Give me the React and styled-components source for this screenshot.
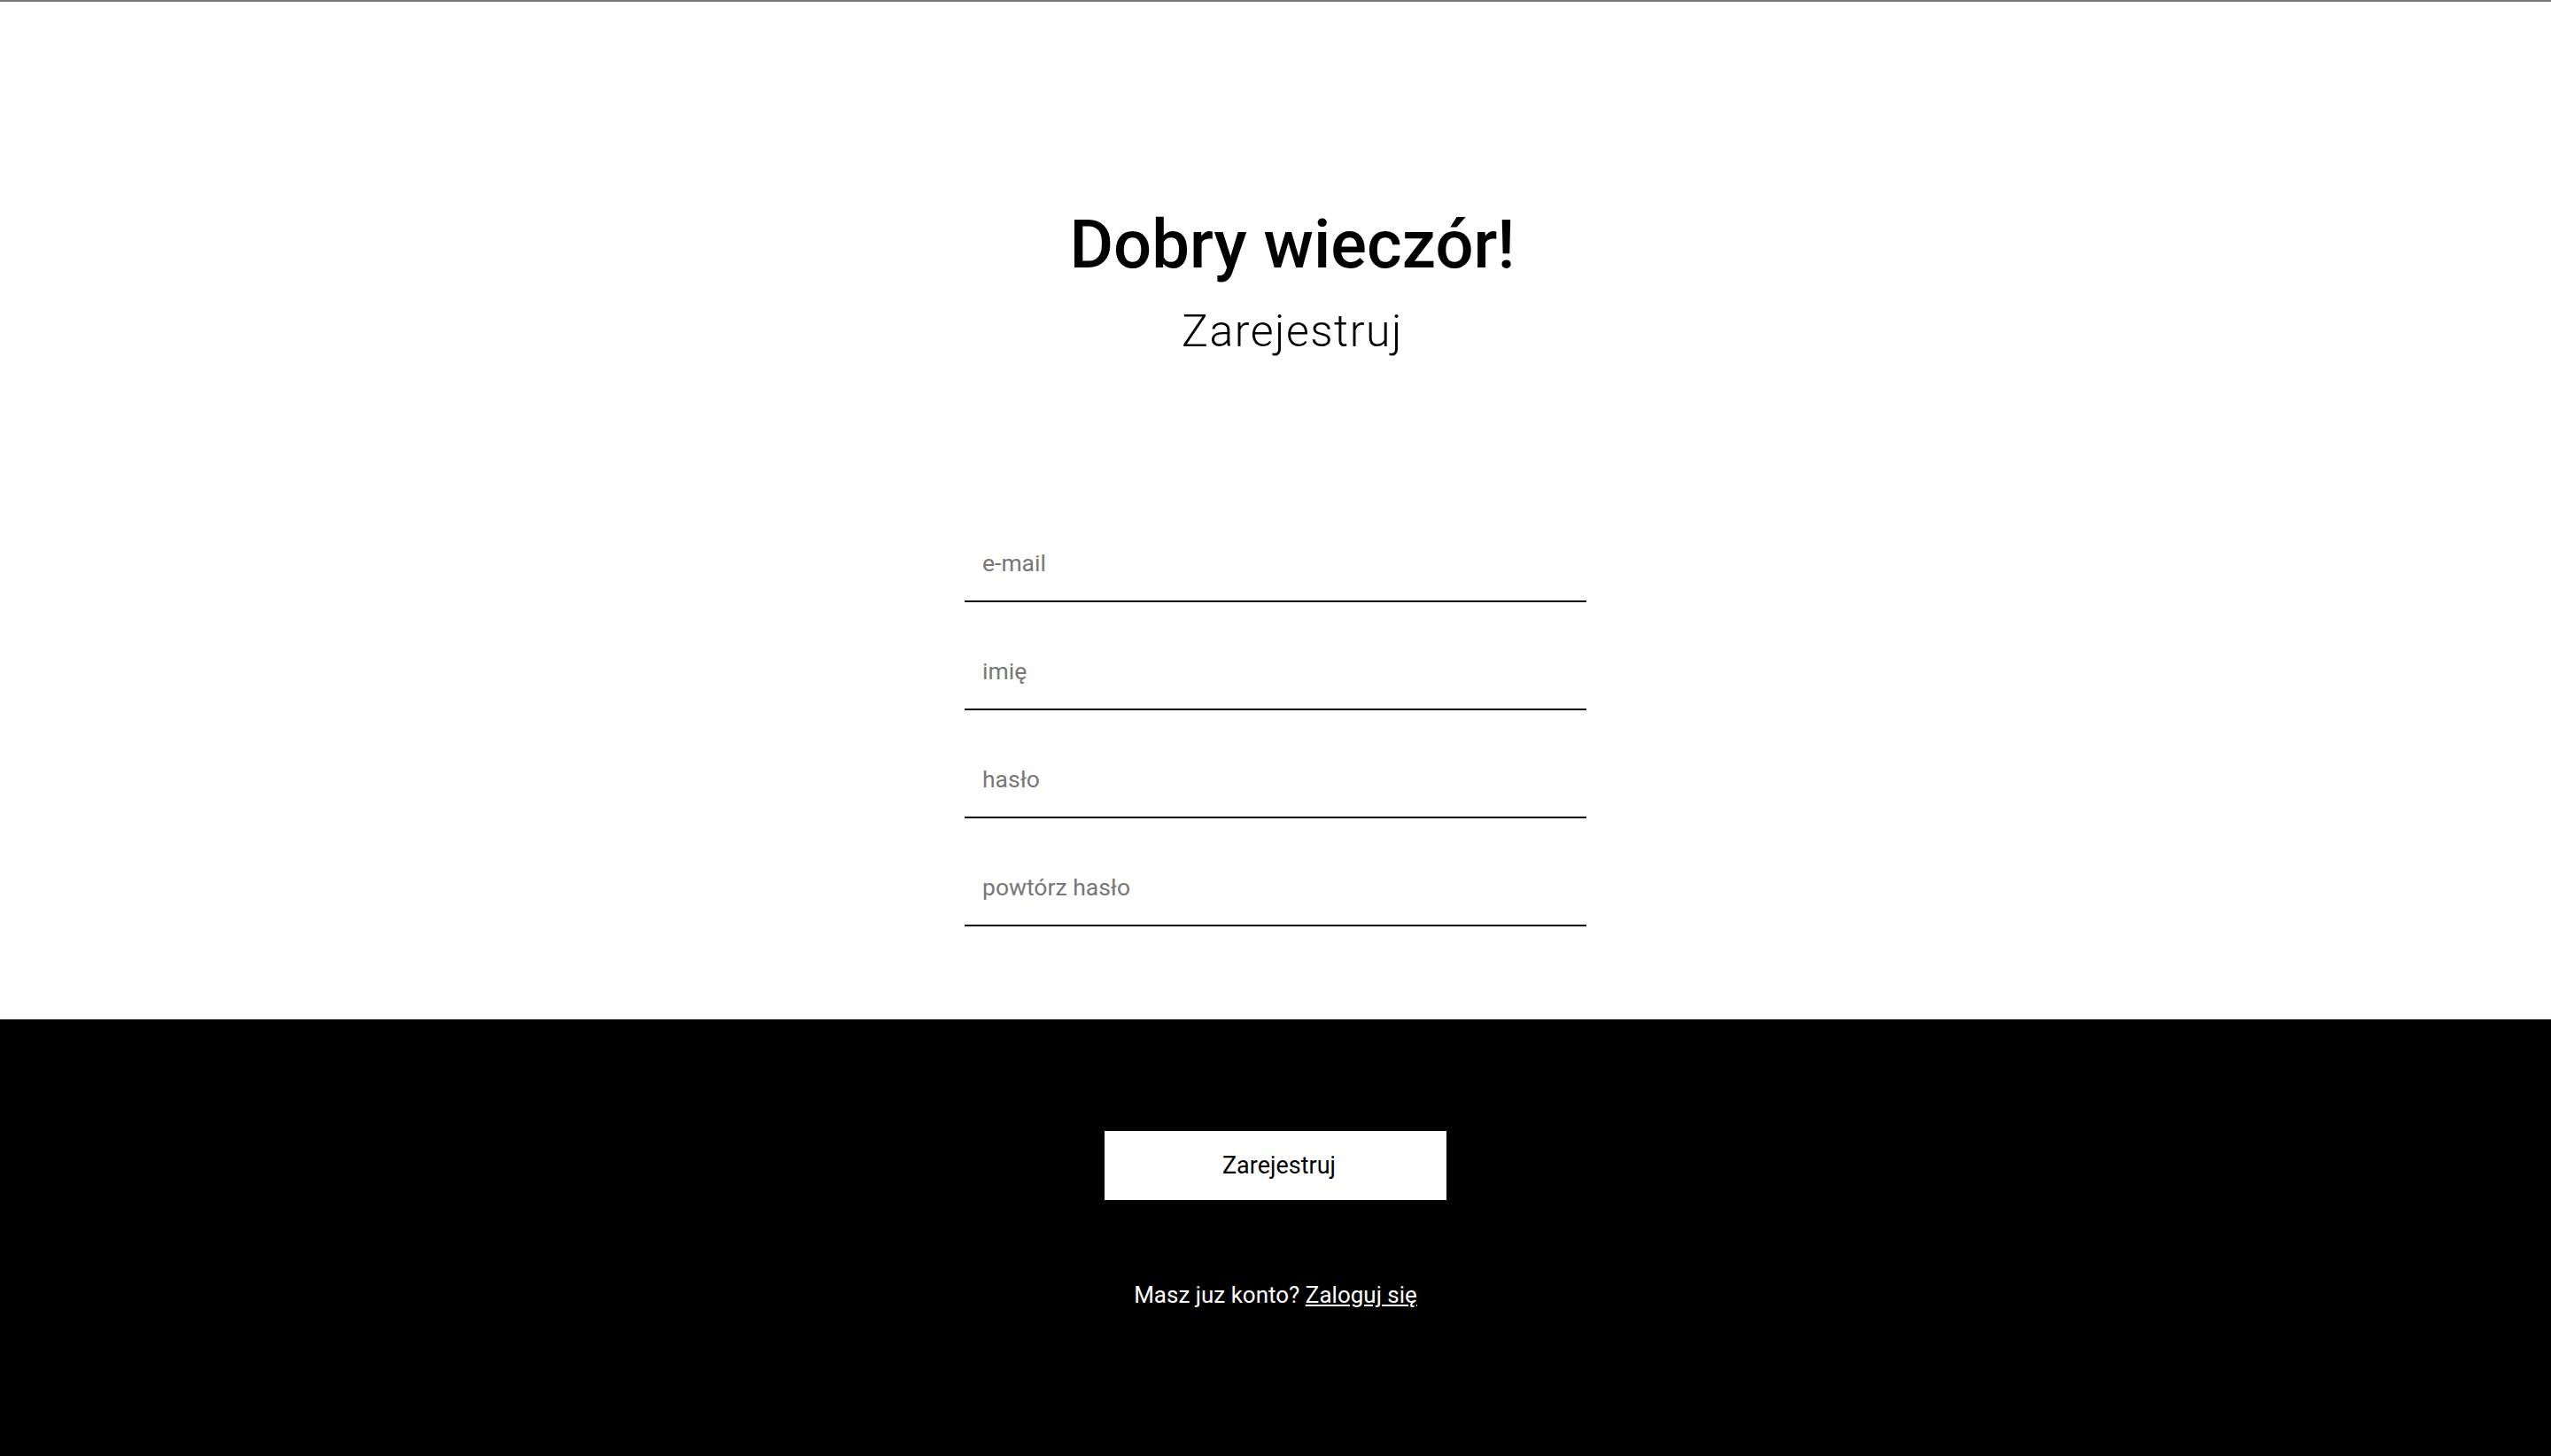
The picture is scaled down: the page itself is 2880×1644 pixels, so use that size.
import React from "react";
import styled, { createGlobalStyle } from "styled-components";

const Global = createGlobalStyle`
  html, body { margin: 0; padding: 0; background: #fff; }
  body { font-family: Roboto, "Open Sans", Arial, sans-serif; }
  * { box-sizing: border-box; }
`;

const Page = styled.div`
  display: flex;
  flex-direction: column;
  min-height: 100vh;
  border-top: 2px solid #777;
`;

const Upper = styled.section`
  height: 1149px;
  display: flex;
  flex-direction: column;
  align-items: center;
  padding-top: 228px;
`;

const Heading = styled.header`
  display: flex;
  flex-direction: column;
  align-items: center;
  padding-left: 38px;
`;

const Title = styled.h1`
  margin: 0;
  font-size: 76px;
  font-weight: 500;
  line-height: 92px;
  color: #000;
`;

const Subtitle = styled.h2`
  margin: 20px 0 0;
  font-size: 50px;
  font-weight: 300;
  letter-spacing: 1.5px;
  line-height: 64px;
  color: #000;
`;

const Form = styled.form`
  display: flex;
  flex-direction: column;
  gap: 42px;
  margin-top: 194px;
  width: 702px;
`;

const Field = styled.input`
  height: 80px;
  width: 100%;
  border: none;
  border-bottom: 2px solid #000;
  padding: 0 20px 8px;
  font-family: Roboto, Arial, sans-serif;
  font-size: 26.5px;
  color: #000;
  background: transparent;
  outline: none;
  &::placeholder { color: #777; }
`;

const Lower = styled.section`
  flex: 1;
  background: #000;
  display: flex;
  flex-direction: column;
  align-items: center;
  padding-top: 126px;
`;

const Button = styled.button`
  width: 386px;
  height: 78px;
  padding: 0 0 0 8px;
  background: #fff;
  border: none;
  font-family: Roboto, Arial, sans-serif;
  font-size: 27px;
  color: #000;
  cursor: pointer;
`;

const Note = styled.p`
  margin: 87px 0 0;
  color: #fff;
  font-size: 26px;
  line-height: 40px;
`;

const Link = styled.a`
  color: #fff;
  text-decoration: underline;
`;

export default function App() {
  return (
    <>
      <Global />
      <Page>
        <Upper>
          <Heading>
            <Title>Dobry wieczór!</Title>
            <Subtitle>Zarejestruj</Subtitle>
          </Heading>
          <Form onSubmit={(e) => e.preventDefault()}>
            <Field type="email" placeholder="e-mail" />
            <Field type="text" placeholder="imię" />
            <Field type="password" placeholder="hasło" />
            <Field type="password" placeholder="powtórz hasło" />
          </Form>
        </Upper>
        <Lower>
          <Button type="button">Zarejestruj</Button>
          <Note>
            Masz juz konto? <Link href="#">Zaloguj się</Link>
          </Note>
        </Lower>
      </Page>
    </>
  );
}
